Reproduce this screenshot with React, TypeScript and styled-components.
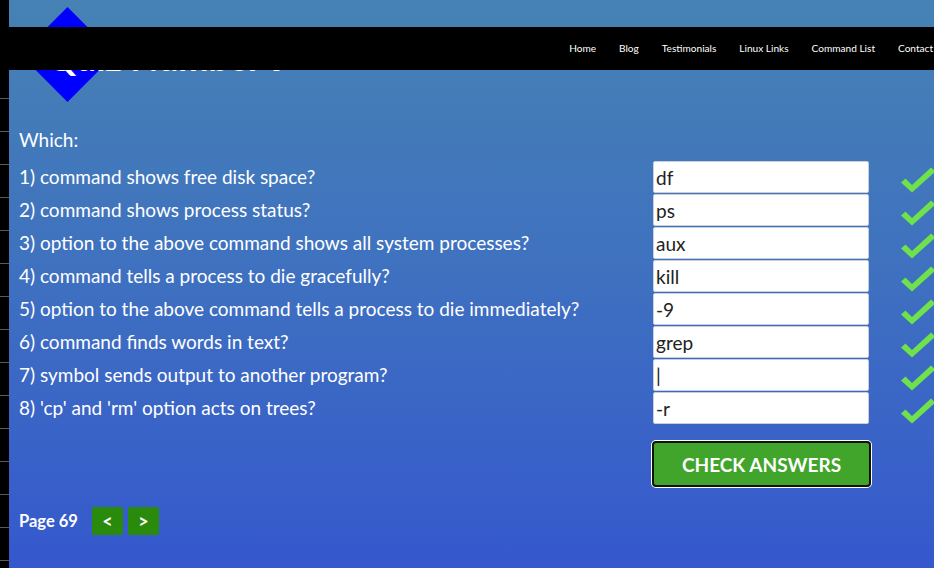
import React from "react";
import styled, { createGlobalStyle } from "styled-components";

const GlobalStyle = createGlobalStyle`
  html, body { margin: 0; padding: 0; }
  body { font-family: Lato, "Open Sans", Arial, sans-serif; background: #000; }
  * { box-sizing: border-box; }
`;

const Page = styled.div`
  position: relative;
  display: flex;
  width: 934px;
  height: 568px;
  overflow: hidden;
`;

const LeftRail = styled.div`
  flex: 0 0 9px;
  background: repeating-linear-gradient(
    to bottom,
    #000 0px,
    #000 32px,
    #5a5a5a 32px,
    #5a5a5a 33px
  );
`;

const Main = styled.main`
  flex: 1;
  background: linear-gradient(to bottom, #4682b4 0%, #3f72bf 45%, #3558cd 100%);
  padding: 0 0 0 10px;
  color: #fff;
`;

const NavBar = styled.nav`
  position: absolute;
  top: 27px;
  left: 0;
  right: 0;
  height: 43px;
  background: #000;
  display: flex;
  justify-content: flex-end;
  align-items: center;
  gap: 23px;
  padding: 0 1px 2px 0;
  z-index: 10;
`;

const NavLink = styled.a`
  color: #fff;
  font-size: 10.1px;
  text-decoration: none;
  white-space: nowrap;
`;

const Header = styled.header`
  position: relative;
  height: 123px;
  padding: 39px 0 0 28px;
  margin-left: -10px;

  &::before {
    content: "";
    position: absolute;
    left: 25px;
    top: 21px;
    width: 67px;
    height: 67px;
    background: #0000ff;
    transform: rotate(45deg);
  }
`;

const Title = styled.h1`
  position: relative;
  z-index: 1;
  margin: 0 0 0 10px;
  font-size: 36px;
  line-height: 36px;
  font-weight: 700;
  color: #fff;
`;

const Lead = styled.div`
  font-size: 19px;
  line-height: 33px;
  height: 33px;
`;

const Quiz = styled.div`
  margin-top: 4px;
  display: flex;
  flex-direction: column;
`;

const Row = styled.div`
  display: flex;
  align-items: flex-start;
  height: 33px;
`;

const Question = styled.label`
  flex: 0 0 634px;
  font-size: 19px;
  line-height: 34px;
  white-space: nowrap;
`;

const Answer = styled.input`
  width: 216px;
  height: 32px;
  margin-top: 1px;
  border: 1px solid #c9cfd8;
  border-radius: 2px;
  background: #fff;
  padding: 0 2px;
  font-family: Lato, Arial, sans-serif;
  font-size: 19px;
  color: #222;
  outline: none;
`;

const Check = styled.svg`
  flex: 0 0 auto;
  margin: 7px 0 0 31px;
`;

const ButtonRow = styled.div`
  margin: 17px 0 0 633px;
`;

const CheckButton = styled.button`
  width: 219px;
  height: 46px;
  background: #40a52a;
  border: 2px solid #111;
  border-radius: 4px;
  box-shadow: 0 0 0 1px #fff;
  color: #fff;
  font-family: Lato, Arial, sans-serif;
  font-weight: 700;
  font-size: 19px;
  text-transform: uppercase;
  cursor: pointer;
`;

const Pager = styled.div`
  margin-top: 20px;
  display: flex;
  align-items: center;
  gap: 5px;
`;

const PageLabel = styled.span`
  font-weight: 700;
  font-size: 16.5px;
  margin-right: 9px;
`;

const PageButton = styled.button`
  width: 31px;
  height: 28px;
  border: none;
  border-radius: 2px;
  background: #2a8a0c;
  color: #fff;
  font-family: Lato, Arial, sans-serif;
  font-weight: 700;
  font-size: 18px;
  padding: 0;
  cursor: pointer;
`;

const CheckMark = () => (
  <Check width="36" height="26" viewBox="0 0 36 26">
    <path
      d="M1 15.5 L5.5 11.5 L12 18 L31 0.5 L35.5 4.5 L12 25.5 Z"
      fill="#6fe14c"
    />
  </Check>
);

const questions: [string, string][] = [
  ["1) command shows free disk space?", "df"],
  ["2) command shows process status?", "ps"],
  ["3) option to the above command shows all system processes?", "aux"],
  ["4) command tells a process to die gracefully?", "kill"],
  ["5) option to the above command tells a process to die immediately?", "-9"],
  ["6) command finds words in text?", "grep"],
  ["7) symbol sends output to another program?", "|"],
  ["8) 'cp' and 'rm' option acts on trees?", "-r"],
];

const navItems = ["Home", "Blog", "Testimonials", "Linux Links", "Command List", "Contact"];

export default function App() {
  return (
    <>
      <GlobalStyle />
      <Page>
        <LeftRail />
        <Main>
          <Header>
            <Title>Quiz Number 9</Title>
          </Header>
          <Lead>Which:</Lead>
          <Quiz>
            {questions.map(([q, a], i) => (
              <Row key={i}>
                <Question>{q}</Question>
                <Answer defaultValue={a} />
                <CheckMark />
              </Row>
            ))}
          </Quiz>
          <ButtonRow>
            <CheckButton>Check Answers</CheckButton>
          </ButtonRow>
          <Pager>
            <PageLabel>Page 69</PageLabel>
            <PageButton>&lt;</PageButton>
            <PageButton>&gt;</PageButton>
          </Pager>
        </Main>
        <NavBar>
          {navItems.map((n) => (
            <NavLink key={n} href="#">
              {n}
            </NavLink>
          ))}
        </NavBar>
      </Page>
    </>
  );
}
